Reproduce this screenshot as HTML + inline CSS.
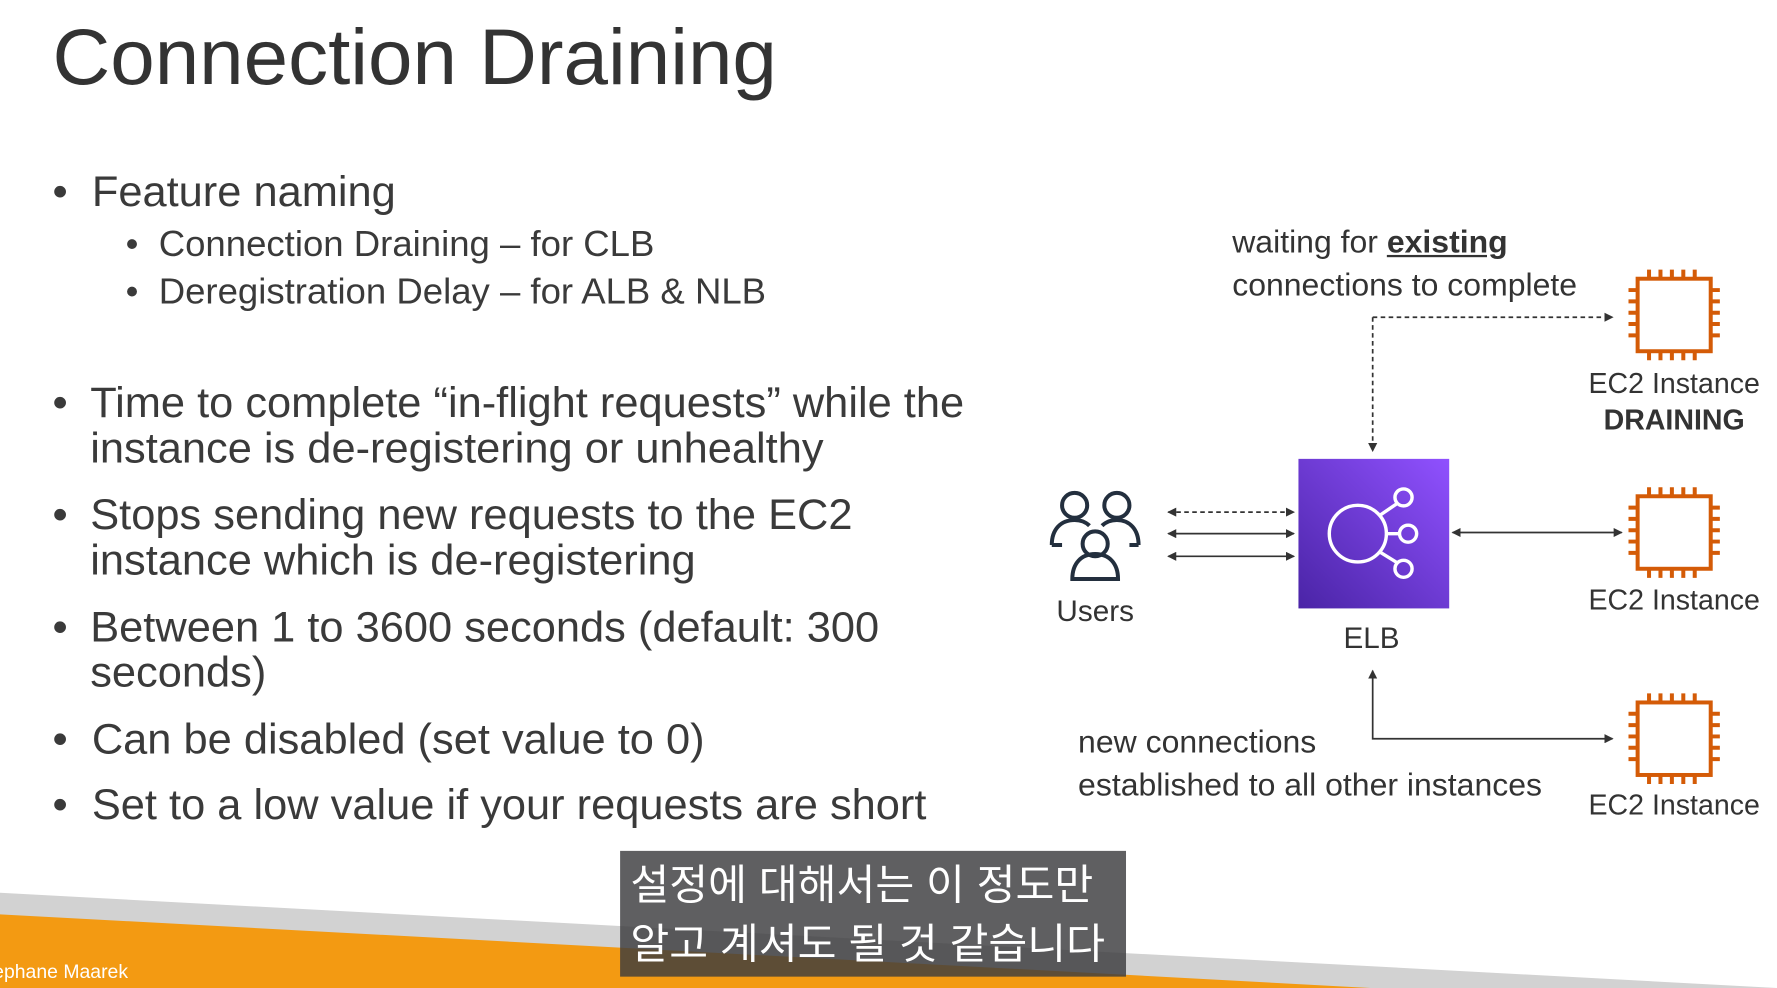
<!DOCTYPE html>
<html><head><meta charset="utf-8"><style>
html,body{margin:0;padding:0;background:#fff;overflow:hidden;width:1777px;height:988px}
#s{position:absolute;left:0;top:0;width:1556px;height:872px;transform-origin:0 0;transform:scale(1.1420,1.1330);font-family:"Liberation Sans","Noto Sans CJK KR",sans-serif;color:#3a3a3a}
.t{position:absolute;white-space:nowrap}
.b{font-size:38px;line-height:40px}
.sb{font-size:32px}
.d{font-size:28px;color:#333}
.e{font-size:25px;color:#333}
#dg{position:absolute;left:-9px;top:0;width:1556px;height:872px}
</style></head><body><div id="s">
<svg width="1556" height="872" style="position:absolute;left:0;top:0">
<polygon points="0,788 1556,872 0,872" fill="#d2d2d2"/>
<polygon points="0,807 1200,872 0,872" fill="#f39a12"/>
<defs>
<marker id="a" markerWidth="8" markerHeight="8" refX="7" refY="4" orient="auto-start-reverse" markerUnits="userSpaceOnUse"><path d="M0,0 L8,4 L0,8z" fill="#333"/></marker>
<linearGradient id="g" x1="0" y1="1" x2="1" y2="0"><stop offset="0" stop-color="#4a24a6"/><stop offset="1" stop-color="#9051ff"/></linearGradient>
<g id="chip" fill="none" stroke="#d45b07" stroke-width="3.5">
<rect x="8" y="8" width="64" height="64"/>
<path d="M18,0v8M28,0v8M38,0v8M48,0v8M58,0v8M18,72v8M28,72v8M38,72v8M48,72v8M58,72v8M0,18h8M0,28h8M0,38h8M0,48h8M0,58h8M72,18h8M72,28h8M72,38h8M72,48h8M72,58h8"/>
</g>
</defs>
<g transform="translate(-9,0)">
<use href="#chip" x="1435" y="238"/>
<use href="#chip" x="1435" y="430"/>
<use href="#chip" x="1435" y="612"/>
<rect x="1146" y="405" width="132" height="132" fill="url(#g)"/>
<g fill="none" stroke="#fff" stroke-width="3">
<circle cx="1198" cy="471" r="25"/>
<circle cx="1238" cy="439" r="7.5"/><circle cx="1242" cy="471" r="7.5"/><circle cx="1238" cy="502" r="7.5"/>
<path d="M1217,455 L1233,444 M1223,471 L1234,471 M1217,487 L1233,497"/>
</g>
<g fill="none" stroke="#333" stroke-width="1.5">
<path d="M1211,280 V398" stroke-dasharray="4,3" marker-end="url(#a)"/>
<path d="M1211,280 H1421" stroke-dasharray="4,3" marker-end="url(#a)"/>
<path d="M1032,452 H1142" stroke-dasharray="4,3" marker-start="url(#a)" marker-end="url(#a)"/>
<path d="M1032,471 H1142" marker-start="url(#a)" marker-end="url(#a)"/>
<path d="M1032,491 H1142" marker-start="url(#a)" marker-end="url(#a)"/>
<path d="M1281,470 H1429" marker-start="url(#a)" marker-end="url(#a)"/>
<path d="M1421,652 H1211 V592" marker-start="url(#a)" marker-end="url(#a)"/>
</g>
<g fill="none" stroke="#232f3e" stroke-width="3.5">
<circle cx="950" cy="446" r="11"/><circle cx="987" cy="446" r="11"/>
<path d="M930,481 c0,-14 8,-22 20,-22 c6,0 10,2 13,5 M1006,481 c0,-14 -8,-22 -19,-22 c-6,0 -10,2 -13,5 M930,481h9 M998,481h8"/>
<circle cx="968" cy="480" r="11"/>
<path d="M948,511 c0,-14 8,-22 20,-22 c12,0 20,8 20,22z"/>
</g>
</g>
<rect x="543" y="751" width="443" height="111" fill="rgba(60,60,62,0.82)"/>
</svg>
<div class="t" style="left:46px;top:10px;font-size:70px;color:#333">Connection Draining</div>
<div class="t b" style="left:46px;top:150px">•&nbsp; Feature naming</div>
<div class="t sb" style="left:110px;top:197px">•&nbsp;&nbsp;Connection Draining – for CLB</div>
<div class="t sb" style="left:110px;top:239px">•&nbsp;&nbsp;Deregistration Delay – for ALB &amp; NLB</div>
<div class="t b" style="left:46px;top:336px">•</div>
<div class="t b" style="left:79px;top:336px">Time to complete “in-flight requests” while the<br>instance is de-registering or unhealthy</div>
<div class="t b" style="left:46px;top:435px">•</div>
<div class="t b" style="left:79px;top:435px">Stops sending new requests to the EC2<br>instance which is de-registering</div>
<div class="t b" style="left:46px;top:534px">•</div>
<div class="t b" style="left:79px;top:534px">Between 1 to 3600 seconds (default: 300<br>seconds)</div>
<div class="t b" style="left:46px;top:633px">•&nbsp; Can be disabled (set value to 0)</div>
<div class="t b" style="left:46px;top:691px">•&nbsp; Set to a low value if your requests are short</div>
<div id="dg">
<div class="t d" style="left:1088px;top:198px">waiting for <b style="text-decoration:underline">existing</b></div>
<div class="t d" style="left:1088px;top:236px">connections to complete</div>
<div class="t e" style="left:1395px;top:325px;width:160px;text-align:center">EC2 Instance<br><b style="line-height:34px">DRAINING</b></div>
<div class="t e" style="left:1395px;top:516px;width:160px;text-align:center">EC2 Instance</div>
<div class="t e" style="left:1395px;top:697px;width:160px;text-align:center">EC2 Instance</div>
<div class="t e" style="left:918px;top:524px;width:100px;text-align:center;font-size:26px">Users</div>
<div class="t e" style="left:1160px;top:548px;width:100px;text-align:center;font-size:26px">ELB</div>
<div class="t d" style="left:953px;top:639px">new connections</div>
<div class="t d" style="left:953px;top:677px">established to all other instances</div>
</div>
<div class="t" style="left:552px;top:756px;font-size:37px;color:#fff;line-height:52px">설정에 대해서는 이 정도만<br>알고 계셔도 될 것 같습니다</div>
<div class="t" style="left:-6px;top:848px;font-size:17px;color:#fff">ephane Maarek</div>
</div></body></html>
